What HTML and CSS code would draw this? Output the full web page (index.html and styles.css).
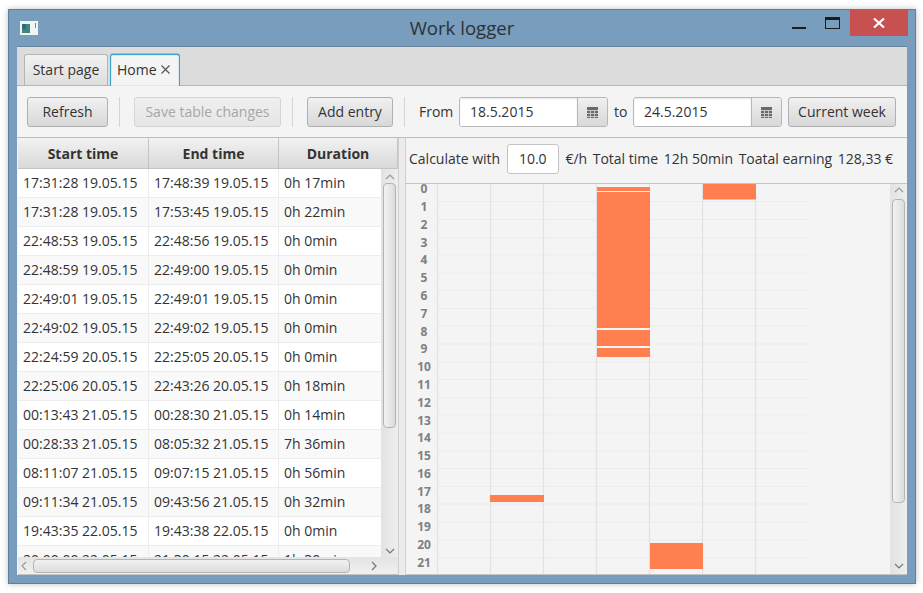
FILE: index.html
```html
<!DOCTYPE html>
<html lang="en">
<head>
    <meta charset="UTF-8">
    <title>Work logger</title>
    <link rel="stylesheet" href="styles.css">
</head>
<body>
    <div class="window">
        <div class="titlebar">
            <svg class="app-icon" width="18" height="14" viewBox="0 0 18 14">
                <rect x="0" y="0" width="18" height="14" fill="#f2f4f4"/>
                <rect x="2" y="3" width="8" height="9" fill="#3d8a7c"/>
                <rect x="2" y="3" width="4" height="5" fill="#2c6a8c"/>
                <rect x="15" y="2" width="1" height="5" fill="#7d8a90"/>
            </svg>
            <div class="title">Work logger</div>
            <div class="win-min"></div>
            <div class="win-max"></div>
            <div class="win-close">
                <svg width="12" height="10" viewBox="0 0 12 10"><path d="M1 0.5 L11 9.5 M11 0.5 L1 9.5" stroke="#fff" stroke-width="2.2" fill="none"/></svg>
            </div>
        </div>
        <div class="client">
            <div class="tabbar">
                <div class="tab">Start page</div>
                <div class="tab tab-active">Home <span class="tab-x">
                    <svg width="9" height="9" viewBox="0 0 9 9"><path d="M0.5 0.5 L8.5 8.5 M8.5 0.5 L0.5 8.5" stroke="#555" stroke-width="1.2" fill="none"/></svg>
                </span></div>
            </div>
            <div class="toolbar">
                <button class="btn btn-refresh">Refresh</button>
                <div class="sep"></div>
                <button class="btn btn-save" disabled>Save table changes</button>
                <div class="sep"></div>
                <button class="btn btn-add">Add entry</button>
                <div class="sep"></div>
                <span class="lbl-from">From</span>
                <div class="datepick">
                    <div class="date-val">18.5.2015</div>
                    <div class="date-btn">
                        <svg width="11" height="11" viewBox="0 0 11 11"><rect width="11" height="11" fill="#6a6a6a"/><path d="M0 3.5H11M0 6.5H11M0 9.5H11M3.5 3V11M7.5 3V11" stroke="#c8c8c8" stroke-width="1"/></svg>
                    </div>
                </div>
                <span class="lbl-to">to</span>
                <div class="datepick">
                    <div class="date-val">24.5.2015</div>
                    <div class="date-btn">
                        <svg width="11" height="11" viewBox="0 0 11 11"><rect width="11" height="11" fill="#6a6a6a"/><path d="M0 3.5H11M0 6.5H11M0 9.5H11M3.5 3V11M7.5 3V11" stroke="#c8c8c8" stroke-width="1"/></svg>
                    </div>
                </div>
                <button class="btn btn-week">Current week</button>
            </div>
            <div class="content">
                <div class="table-pane">
                    <div class="thead">
                        <div class="th th-1">Start time</div>
                        <div class="th th-2">End time</div>
                        <div class="th th-3">Duration</div>
                    </div>
                    <div class="table-top">
                        <div class="table-main">
                            <div class="row"><div class="td">17:31:28 19.05.15</div><div class="td">17:48:39 19.05.15</div><div class="td">0h 17min</div></div>
                            <div class="row alt"><div class="td">17:31:28 19.05.15</div><div class="td">17:53:45 19.05.15</div><div class="td">0h 22min</div></div>
                            <div class="row"><div class="td">22:48:53 19.05.15</div><div class="td">22:48:56 19.05.15</div><div class="td">0h 0min</div></div>
                            <div class="row alt"><div class="td">22:48:59 19.05.15</div><div class="td">22:49:00 19.05.15</div><div class="td">0h 0min</div></div>
                            <div class="row"><div class="td">22:49:01 19.05.15</div><div class="td">22:49:01 19.05.15</div><div class="td">0h 0min</div></div>
                            <div class="row alt"><div class="td">22:49:02 19.05.15</div><div class="td">22:49:02 19.05.15</div><div class="td">0h 0min</div></div>
                            <div class="row"><div class="td">22:24:59 20.05.15</div><div class="td">22:25:05 20.05.15</div><div class="td">0h 0min</div></div>
                            <div class="row alt"><div class="td">22:25:06 20.05.15</div><div class="td">22:43:26 20.05.15</div><div class="td">0h 18min</div></div>
                            <div class="row"><div class="td">00:13:43 21.05.15</div><div class="td">00:28:30 21.05.15</div><div class="td">0h 14min</div></div>
                            <div class="row alt"><div class="td">00:28:33 21.05.15</div><div class="td">08:05:32 21.05.15</div><div class="td">7h 36min</div></div>
                            <div class="row"><div class="td">08:11:07 21.05.15</div><div class="td">09:07:15 21.05.15</div><div class="td">0h 56min</div></div>
                            <div class="row alt"><div class="td">09:11:34 21.05.15</div><div class="td">09:43:56 21.05.15</div><div class="td">0h 32min</div></div>
                            <div class="row"><div class="td">19:43:35 22.05.15</div><div class="td">19:43:38 22.05.15</div><div class="td">0h 0min</div></div>
                            <div class="row alt row-cut"><div class="td">20:00:00 22.05.15</div><div class="td">21:30:15 22.05.15</div><div class="td">1h 30min</div></div>
                        </div>
                        <div class="vscroll vscroll-table">
                            <svg class="arrow" width="10" height="6" viewBox="0 0 10 6"><path d="M1 5 L5 1 L9 5" stroke="#999" stroke-width="1.2" fill="none"/></svg>
                            <div class="thumb thumb-table"></div>
                            <div class="spacer"></div>
                            <svg class="arrow" width="10" height="6" viewBox="0 0 10 6"><path d="M1 1 L5 5 L9 1" stroke="#777" stroke-width="1.2" fill="none"/></svg>
                        </div>
                    </div>
                    <div class="hscroll">
                        <svg width="6" height="10" viewBox="0 0 6 10"><path d="M5 1 L1 5 L5 9" stroke="#999" stroke-width="1.2" fill="none"/></svg>
                        <div class="hthumb"></div>
                        <svg width="6" height="10" viewBox="0 0 6 10"><path d="M1 1 L5 5 L1 9" stroke="#777" stroke-width="1.2" fill="none"/></svg>
                    </div>
                </div>
                <div class="splitter"></div>
                <div class="chart-pane">
                    <div class="calc">
                        <span class="calc-first">Calculate with</span>
                        <div class="rate">10.0</div>
                        <span>€/h</span>
                        <span>Total time</span>
                        <span>12h 50min</span>
                        <span>Toatal earning</span>
                        <span>128,33 €</span>
                    </div>
                    <div class="chart-wrap">
                        <svg class="chart" width="482" height="390" viewBox="406 184 482 390">
                            <g class="hlines">
                                <path d="M437 201.5H808M437 219.5H808M437 237.5H808M437 255H808M437 273H808M437 290.5H808M437 308.5H808M437 326H808M437 344H808M437 362H808M437 379.5H808M437 397.5H808M437 415H808M437 433H808M437 451H808M437 468.5H808M437 486.5H808M437 504H808M437 522H808M437 540H808M437 557.5H808"/>
                            </g>
                            <g class="vlines">
                                <path d="M437.5 184V574M490.5 184V574M543.5 184V574M596.5 184V574M649.5 184V574M702.5 184V574M755.5 184V574"/>
                            </g>
                            <g class="bars">
                                <rect x="597" y="187" width="53" height="4"/>
                                <rect x="597" y="192" width="53" height="136"/>
                                <rect x="597" y="330" width="53" height="16"/>
                                <rect x="597" y="348" width="53" height="9"/>
                                <rect x="703" y="184" width="53" height="15.5"/>
                                <rect x="490" y="495" width="54" height="7"/>
                                <rect x="650" y="543" width="53" height="26"/>
                            </g>
                            <g class="hours">
                                <text x="424" y="193">0</text><text x="424" y="211">1</text><text x="424" y="229">2</text><text x="424" y="247">3</text>
                                <text x="424" y="264">4</text><text x="424" y="282">5</text><text x="424" y="300">6</text><text x="424" y="318">7</text>
                                <text x="424" y="336">8</text><text x="424" y="353">9</text><text x="424" y="371">10</text><text x="424" y="389">11</text>
                                <text x="424" y="407">12</text><text x="424" y="425">13</text><text x="424" y="442">14</text><text x="424" y="460">15</text>
                                <text x="424" y="478">16</text><text x="424" y="496">17</text><text x="424" y="513">18</text><text x="424" y="531">19</text>
                                <text x="424" y="549">20</text><text x="424" y="567">21</text>
                            </g>
                        </svg>
                        <div class="vscroll vscroll-chart">
                            <svg class="arrow" width="10" height="6" viewBox="0 0 10 6"><path d="M1 5 L5 1 L9 5" stroke="#999" stroke-width="1.2" fill="none"/></svg>
                            <div class="thumb thumb-chart"></div>
                            <div class="spacer"></div>
                            <svg class="arrow" width="10" height="6" viewBox="0 0 10 6"><path d="M1 1 L5 5 L9 1" stroke="#777" stroke-width="1.2" fill="none"/></svg>
                        </div>
                    </div>
                </div>
            </div>
        </div>
    </div>
</body>
</html>
```

FILE: styles.css
```css
html, body {
    margin: 0;
    padding: 0;
    height: 100%;
    overflow: hidden;
    background: #fff;
    color: #333;
    font-family: "Open Sans", "Liberation Sans", sans-serif;
    font-size: 14px;
}

.window {
    box-sizing: border-box;
    width: 908px;
    height: 575px;
    margin: 9px 0 0 8px;
    border: 1px solid #5d7f9e;
    background: #799dbd;
    box-shadow: 0 0 6px rgba(0, 0, 0, 0.25);
    display: flex;
    flex-direction: column;
}

.titlebar {
    height: 36px;
    position: relative;
    flex: none;
}

.app-icon {
    position: absolute;
    left: 11px;
    top: 11px;
}

.title {
    text-align: center;
    font-size: 18.6px;
    line-height: 36px;
    color: #2b3238;
}

.win-min {
    position: absolute;
    left: 783px;
    top: 17px;
    width: 14px;
    height: 2px;
    background: #1c1c1c;
}

.win-max {
    position: absolute;
    left: 816px;
    top: 7px;
    width: 13px;
    height: 8px;
    border: 1px solid #1c1c1c;
    border-top-width: 3px;
}

.win-close {
    position: absolute;
    left: 841px;
    top: 0;
    width: 58px;
    height: 26px;
    background: #c75050;
    display: flex;
    align-items: center;
    justify-content: center;
}

.client {
    flex: none;
    width: 890px;
    height: 528px;
    margin-left: 8px;
    border-top: 1px solid #68849c;
    background: #f4f4f4;
    display: flex;
    flex-direction: column;
}

.tabbar {
    height: 39px;
    flex: none;
    box-sizing: border-box;
    background: #dcdcdc;
    border-bottom: 1px solid #b5b5b5;
    padding: 7px 0 0 7px;
    display: flex;
    gap: 2px;
    align-items: flex-start;
}

.tab {
    box-sizing: border-box;
    height: 31px;
    width: 84px;
    text-align: center;
    line-height: 29px;
    border: 1px solid #b5b5b5;
    border-bottom: none;
    border-radius: 3px 3px 0 0;
    background: linear-gradient(#f2f2f2, #dedede);
}

.tab-active {
    width: 70px;
    height: 32px;
    background: #f4f4f4;
    border: 1px solid #39a5cf;
    border-bottom: none;
    box-shadow: inset 0 0 0 1px #d4ebf4, 0 -1px 0 #b5b5b5;
    display: flex;
    align-items: center;
    padding: 0 0 2px 6px;
    gap: 4px;
    line-height: 1;
}

.tab-x {
    display: flex;
}

.toolbar {
    height: 52px;
    flex: none;
    box-sizing: border-box;
    border-bottom: 1px solid #bdbdbd;
    padding: 11px 0 0 10px;
    display: flex;
    align-items: flex-start;
}

.btn {
    box-sizing: border-box;
    height: 30px;
    border: 1px solid #b0b0b0;
    border-radius: 3px;
    background: linear-gradient(#f0f0f0, #d8d8d8);
    color: #333;
    font-family: inherit;
    font-size: 14px;
    padding: 0 0 2px;
}

.btn-refresh { width: 81px; }
.btn-save { width: 147px; color: #a6a6a6; border-color: #d4d4d4; background: linear-gradient(#efefef, #e6e6e6); }
.btn-add { width: 86px; }
.btn-week { width: 108px; margin-left: 6px; }

.sep {
    width: 1px;
    height: 30px;
    background: #d4d4d4;
    margin: 0 14px 0 11px;
}

.lbl-from {
    width: 40px;
    flex: none;
    line-height: 29px;
}

.lbl-to {
    width: 19px;
    flex: none;
    padding-left: 6px;
    line-height: 29px;
}

.datepick {
    box-sizing: border-box;
    width: 149px;
    height: 30px;
    flex: none;
    display: flex;
    border: 1px solid #b8b8b8;
    border-radius: 3px;
    overflow: hidden;
}

.date-val {
    flex: 1;
    background: #fff;
    line-height: 28px;
    padding-left: 10px;
    box-shadow: inset 0 1px 2px rgba(0, 0, 0, 0.1);
}

.date-btn {
    width: 29px;
    border-left: 1px solid #b8b8b8;
    background: linear-gradient(#f0f0f0, #d8d8d8);
    display: flex;
    align-items: center;
    justify-content: center;
}

.content {
    flex: 1;
    min-height: 0;
    display: flex;
}

.table-pane {
    width: 380px;
    flex: none;
    margin-left: 1px;
    box-sizing: border-box;
    border-bottom: 1px solid #c4c4c4;
    display: flex;
    flex-direction: column;
}

.thead {
    height: 31px;
    flex: none;
    display: flex;
    box-sizing: border-box;
    border-bottom: 1px solid #c4c4c4;
    background: linear-gradient(#f2f2f2, #d9d9d9);
}

.th {
    box-sizing: border-box;
    text-align: center;
    font-weight: 700;
    line-height: 31px;
    border-right: 1px solid #c4c4c4;
    color: #333;
}

.th-1, .row .td:nth-child(1) { width: 131px; }
.th-2, .row .td:nth-child(2) { width: 130px; }
.th-3 { width: 119px; }
.row .td:nth-child(3) { width: 102px; border-right: none; }

.table-top {
    height: 388px;
    flex: none;
    display: flex;
    overflow: hidden;
}

.table-main {
    width: 363px;
    flex: none;
    overflow: hidden;
    background: #fff;
}

.row {
    height: 29px;
    box-sizing: border-box;
    display: flex;
    background: #fff;
    border-bottom: 1px solid #ededed;
}

.row.alt {
    background: #f9f9f9;
}

.td {
    box-sizing: border-box;
    padding-left: 5px;
    line-height: 28px;
    border-right: 1px solid #ededed;
    white-space: nowrap;
    overflow: hidden;
}

.vscroll {
    box-sizing: border-box;
    width: 17px;
    flex: none;
    display: flex;
    flex-direction: column;
    align-items: center;
    background: linear-gradient(90deg, #e2e2e2, #eeeeee);
    padding: 3px 0 5px;
}

.vscroll-table {
    padding: 5px 0 3px;
}

.arrow {
    flex: none;
}

.spacer {
    flex: 1;
}

.thumb {
    box-sizing: border-box;
    width: 13px;
    border: 1px solid #b4b4b4;
    border-radius: 4px;
    background: linear-gradient(90deg, #f2f2f2, #dcdcdc);
}

.thumb-table { height: 245px; margin-top: 3px; }
.thumb-chart { height: 304px; margin-top: 6px; }

.hscroll {
    box-sizing: border-box;
    height: 17px;
    flex: none;
    display: flex;
    align-items: center;
    padding: 0 21px 0 3px;
    background: linear-gradient(#e4e4e4, #f0f0f0);
    gap: 6px;
}

.hthumb {
    box-sizing: border-box;
    width: 317px;
    height: 14px;
    flex: none;
    border: 1px solid #b4b4b4;
    border-radius: 4px;
    background: linear-gradient(#f2f2f2, #dcdcdc);
    margin-right: 15px;
}

.splitter {
    width: 8px;
    flex: none;
    background: #ececec;
    border-left: 1px solid #cfcfcf;
    border-right: 1px solid #cfcfcf;
    box-sizing: border-box;
}

.chart-pane {
    flex: 1;
    min-width: 0;
    box-sizing: border-box;
    border-bottom: 1px solid #c4c4c4;
    display: flex;
    flex-direction: column;
}

.calc {
    height: 46px;
    flex: none;
    box-sizing: border-box;
    border-bottom: 1px solid #c4c4c4;
    display: flex;
    align-items: center;
    padding: 0 0 4px 3px;
    gap: 5.6px;
}

.rate {
    box-sizing: border-box;
    width: 52px;
    height: 30px;
    margin: 0 1px;
    border: 1px solid #c4c4c4;
    border-radius: 3px;
    background: #fff;
    text-align: center;
    line-height: 28px;
}

.chart-wrap {
    flex: 1;
    min-height: 0;
    display: flex;
}

.chart {
    flex: none;
    display: block;
}

.hlines path {
    stroke: #ececec;
    stroke-width: 1;
    fill: none;
}

.vlines path {
    stroke: #e2e2e2;
    stroke-width: 1.2;
    fill: none;
}

.bars rect {
    fill: #ff7f50;
}

.hours text {
    font-size: 12px;
    font-weight: 700;
    fill: #808080;
    text-anchor: middle;
}

.vscroll-chart {
    margin-left: auto;
}
```
